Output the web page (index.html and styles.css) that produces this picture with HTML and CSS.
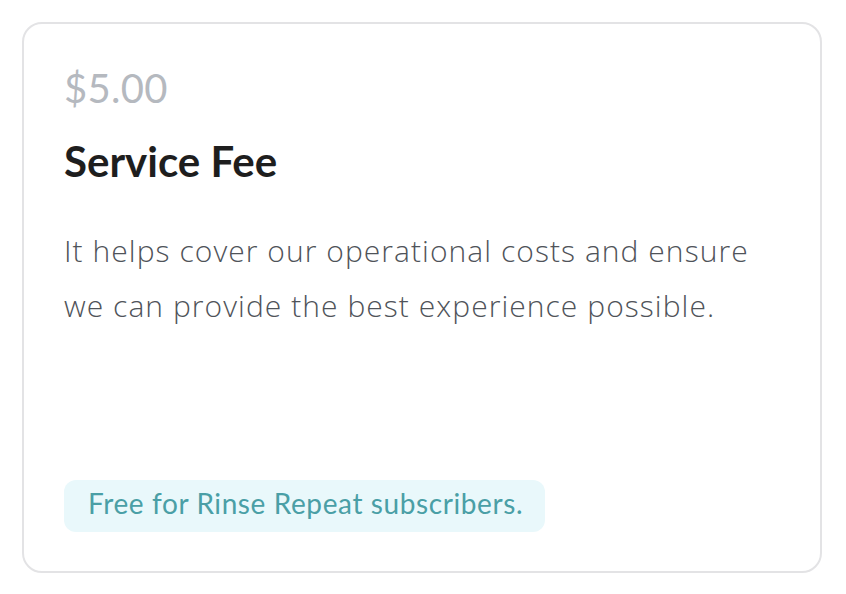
FILE: index.html
```html
<!DOCTYPE html>
<html lang="en">
<head>
  <meta charset="UTF-8">
  <meta name="viewport" content="width=device-width, initial-scale=1.0">
  <title>Service Fee</title>
  <link rel="stylesheet" href="styles.css">
</head>
<body>
  <div class="fee-card">
    <div class="fee-price">$5.00</div>
    <h2 class="fee-title">Service Fee</h2>
    <p class="fee-desc">It helps cover our operational costs and ensure we can provide the best experience possible.</p>
    <!-- subscriber note -->
    <div class="fee-note">Free for Rinse Repeat subscribers.</div>
  </div>
</body>
</html>
```

FILE: styles.css
```css
body {
  font-family: Lato, "Open Sans", sans-serif;
  margin: 0;
  padding: 0;
  background: #fff;
}

.fee-card {
  display: flex;
  flex-direction: column;
  align-items: flex-start;
  box-sizing: border-box;
  width: 800px;
  height: 551px;
  margin: 22px 0 0 22px;
  padding: 40px 40px 39px 40px;
  border: 2px solid #e3e3e5;
  border-radius: 20px;
}

.fee-price {
  font-size: 40px;
  line-height: 48px;
  letter-spacing: 0.3px;
  color: #b5b9bf;
}

.fee-title {
  margin: 24px 0 0;
  font-size: 42px;
  line-height: 50px;
  font-weight: 700;
  color: #1e1e1e;
}

.fee-desc {
  margin: 37px 0 0;
  max-width: 700px;
  font-family: "Open Sans", Lato, sans-serif;
  font-size: 30px;
  line-height: 55px;
  font-weight: 300;
  letter-spacing: 1.05px;
  color: #4f5359;
}

.fee-note {
  margin-top: auto;
  padding: 6px 22px 12px 24px;
  border-radius: 12px;
  background: #e9f8fb;
  color: #4a9fa6;
  font-size: 28px;
  line-height: 34px;
  letter-spacing: 0.6px;
}
```
